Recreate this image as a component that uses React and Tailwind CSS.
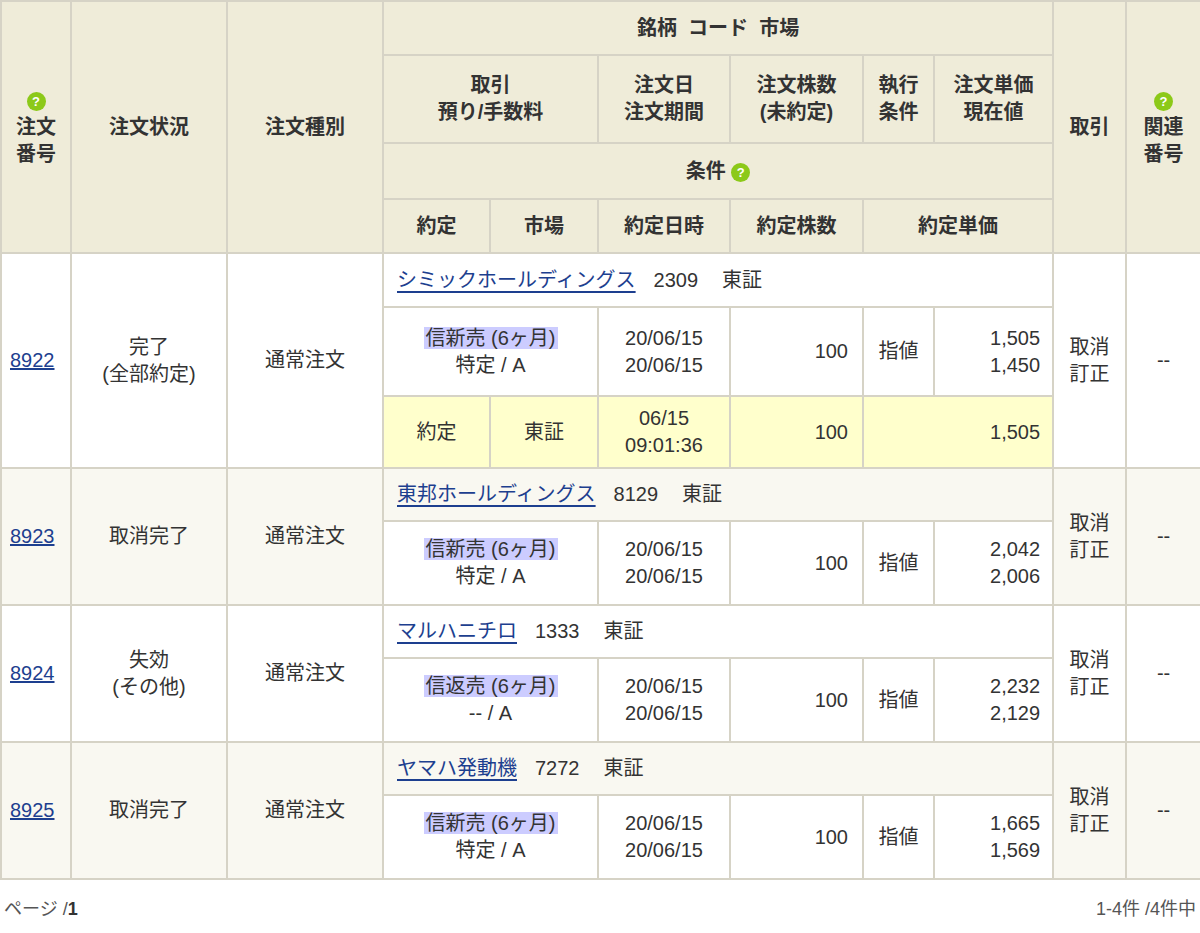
const Q = () => (
  <span className="inline-flex items-center justify-center w-[19px] h-[19px] rounded-full bg-[#8cc919] text-white text-[13px] font-bold leading-none align-middle">?</span>
);

const rows = [
  { no: "8922", status: ["完了", "(全部約定)"], name: "シミックホールディングス", code: "2309", kind: "信新売 (6ヶ月)", acct: "特定 / A", qty: "100", p1: "1,505", p2: "1,450", bg: "bg-white", fill: true },
  { no: "8923", status: ["取消完了"], name: "東邦ホールディングス", code: "8129", kind: "信新売 (6ヶ月)", acct: "特定 / A", qty: "100", p1: "2,042", p2: "2,006", bg: "bg-[#f9f8f1]" },
  { no: "8924", status: ["失効", "(その他)"], name: "マルハニチロ", code: "1333", kind: "信返売 (6ヶ月)", acct: "-- / A", qty: "100", p1: "2,232", p2: "2,129", bg: "bg-white" },
  { no: "8925", status: ["取消完了"], name: "ヤマハ発動機", code: "7272", kind: "信新売 (6ヶ月)", acct: "特定 / A", qty: "100", p1: "1,665", p2: "1,569", bg: "bg-[#f9f8f1]" },
];

const B = "border-2 border-[#d6d3c6]";
const H = `${B} bg-[#efecd9] font-bold text-center`;

export default function App() {
  return (
    <div className="w-[1200px] bg-white text-[#333] text-[20px] leading-[27px]" style={{ fontFamily: '"Liberation Sans","Noto Sans CJK JP",sans-serif' }}>
      <table className="border-collapse table-fixed w-[1200px]">
        <colgroup>
          <col className="w-[70px]" /><col className="w-[156px]" /><col className="w-[156px]" />
          <col className="w-[107px]" /><col className="w-[108px]" /><col className="w-[132px]" />
          <col className="w-[133px]" /><col className="w-[71px]" /><col className="w-[119px]" />
          <col className="w-[73px]" /><col className="w-[75px]" />
        </colgroup>
        <thead>
          <tr className="h-[54px]">
            <th rowSpan={4} className={H}><div><Q /></div>注文<br />番号</th>
            <th rowSpan={4} className={H}>注文状況</th>
            <th rowSpan={4} className={H}>注文種別</th>
            <th colSpan={6} className={H}>銘柄&nbsp;&nbsp;コード&nbsp;&nbsp;市場</th>
            <th rowSpan={4} className={H}>取引</th>
            <th rowSpan={4} className={H}><div><Q /></div>関連<br />番号</th>
          </tr>
          <tr className="h-[88px]">
            <th colSpan={2} className={H}>取引<br />預り/手数料</th>
            <th className={H}>注文日<br />注文期間</th>
            <th className={H}>注文株数<br />(未約定)</th>
            <th className={H}>執行<br />条件</th>
            <th className={H}>注文単価<br />現在値</th>
          </tr>
          <tr className="h-[56px]">
            <th colSpan={6} className={H}>条件 <Q /></th>
          </tr>
          <tr className="h-[54px]">
            <th className={H}>約定</th>
            <th className={H}>市場</th>
            <th className={H}>約定日時</th>
            <th className={H}>約定株数</th>
            <th colSpan={2} className={H}>約定単価</th>
          </tr>
        </thead>
        <tbody>
          {rows.map((r) => {
            const span = r.fill ? 3 : 2;
            return [
              <tr key={r.no + "a"} className={r.fill ? "h-[54px]" : "h-[53px]"}>
                <td rowSpan={span} className={`${B} ${r.bg} pl-[8px]`}><a className="text-[#1d3f8f] underline">{r.no}</a></td>
                <td rowSpan={span} className={`${B} ${r.bg} text-center`}>{r.status.map((s) => <div key={s}>{s}</div>)}</td>
                <td rowSpan={span} className={`${B} ${r.bg} text-center`}>通常注文</td>
                <td colSpan={6} className={`${B} ${r.bg} pl-[13px]`}>
                  <a className="text-[#1d3f8f] underline underline-offset-4">{r.name}</a>
                  <span className="ml-[18px]">{r.code}</span>
                  <span className="ml-[24px]">東証</span>
                </td>
                <td rowSpan={span} className={`${B} ${r.bg} text-center`}>取消<br />訂正</td>
                <td rowSpan={span} className={`${B} ${r.bg} text-center`}>--</td>
              </tr>,
              <tr key={r.no + "b"} className={r.fill ? "h-[89px]" : "h-[84px]"}>
                <td colSpan={2} className={`${B} bg-white text-center`}>
                  <span className="bg-[#ccccff] px-[2px]">{r.kind}</span><br />{r.acct}
                </td>
                <td className={`${B} bg-white text-center`}>20/06/15<br />20/06/15</td>
                <td className={`${B} bg-white text-right pr-[14px]`}>{r.qty}</td>
                <td className={`${B} bg-white text-center`}>指値</td>
                <td className={`${B} bg-white text-right pr-[12px]`}>{r.p1}<br />{r.p2}</td>
              </tr>,
              r.fill && (
                <tr key={r.no + "c"} className="h-[72px] bg-[#ffffcc]">
                  <td className={`${B} text-center`}>約定</td>
                  <td className={`${B} text-center`}>東証</td>
                  <td className={`${B} text-center`}>06/15<br />09:01:36</td>
                  <td className={`${B} text-right pr-[14px]`}>100</td>
                  <td colSpan={2} className={`${B} text-right pr-[12px]`}>1,505</td>
                </tr>
              ),
            ];
          })}
        </tbody>
      </table>
      <div className="flex justify-between px-[4px] pt-[16px] text-[18px] text-[#555]">
        <span>ページ /<b className="text-[#333]">1</b></span>
        <span>1-4件 /4件中</span>
      </div>
    </div>
  );
}
